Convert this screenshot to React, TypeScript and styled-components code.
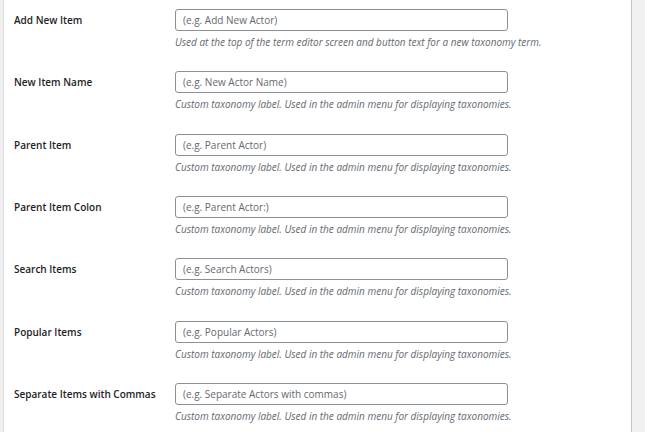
import React from "react";
import styled, { createGlobalStyle } from "styled-components";

const GlobalStyle = createGlobalStyle`
  html, body {
    margin: 0;
    padding: 0;
    background: #f0f0f1;
    font-family: "Open Sans", "Noto Sans", sans-serif;
  }
`;

const fields = [
  {
    label: "Add New Item",
    placeholder: "(e.g. Add New Actor)",
    help: "Used at the top of the term editor screen and button text for a new taxonomy term.",
  },
  {
    label: "New Item Name",
    placeholder: "(e.g. New Actor Name)",
    help: "Custom taxonomy label. Used in the admin menu for displaying taxonomies.",
  },
  {
    label: "Parent Item",
    placeholder: "(e.g. Parent Actor)",
    help: "Custom taxonomy label. Used in the admin menu for displaying taxonomies.",
  },
  {
    label: "Parent Item Colon",
    placeholder: "(e.g. Parent Actor:)",
    help: "Custom taxonomy label. Used in the admin menu for displaying taxonomies.",
  },
  {
    label: "Search Items",
    placeholder: "(e.g. Search Actors)",
    help: "Custom taxonomy label. Used in the admin menu for displaying taxonomies.",
  },
  {
    label: "Popular Items",
    placeholder: "(e.g. Popular Actors)",
    help: "Custom taxonomy label. Used in the admin menu for displaying taxonomies.",
  },
  {
    label: "Separate Items with Commas",
    placeholder: "(e.g. Separate Actors with commas)",
    help: "Custom taxonomy label. Used in the admin menu for displaying taxonomies.",
  },
];

const App = () => {
  return (
    <>
      <GlobalStyle />
      <Page>
        <Panel>
          {fields.map((f) => (
            <FieldRow key={f.label}>
              <FieldLabel>{f.label}</FieldLabel>
              <FieldCell>
                <TextInput type="text" placeholder={f.placeholder} />
                <Description>{f.help}</Description>
              </FieldCell>
            </FieldRow>
          ))}
        </Panel>
      </Page>
    </>
  );
};

const Page = styled.div`
  height: 432px;
  overflow: hidden;
  padding-left: 3px;
  display: flex;
`;

const Panel = styled.div`
  width: 629px;
  background: #fff;
  border-left: 1px solid #dcdcde;
  border-right: 1px solid #c3c4c7;
  padding-left: 10px;
  box-sizing: border-box;
`;

const FieldRow = styled.div`
  display: grid;
  grid-template-columns: 161px 333px;
  padding: 9px 0 12.33px;
`;

const FieldLabel = styled.label`
  font-size: 10px;
  font-weight: 600;
  color: #1d2327;
  line-height: 22px;
`;

const FieldCell = styled.div`
  display: flex;
  flex-direction: column;
`;

const TextInput = styled.input`
  box-sizing: border-box;
  width: 333px;
  height: 22px;
  margin: 0;
  padding: 0 7px;
  border: 1px solid #8c8f94;
  border-radius: 3px;
  font-family: inherit;
  font-size: 10px;
  color: #2c3338;
  background: #fff;
  outline: none;

  &::placeholder {
    color: #646970;
    opacity: 1;
  }
`;

const Description = styled.p`
  margin: 4px 0 0;
  font-size: 10px;
  line-height: 15px;
  font-style: italic;
  color: #646970;
  white-space: nowrap;
`;

export default App;
